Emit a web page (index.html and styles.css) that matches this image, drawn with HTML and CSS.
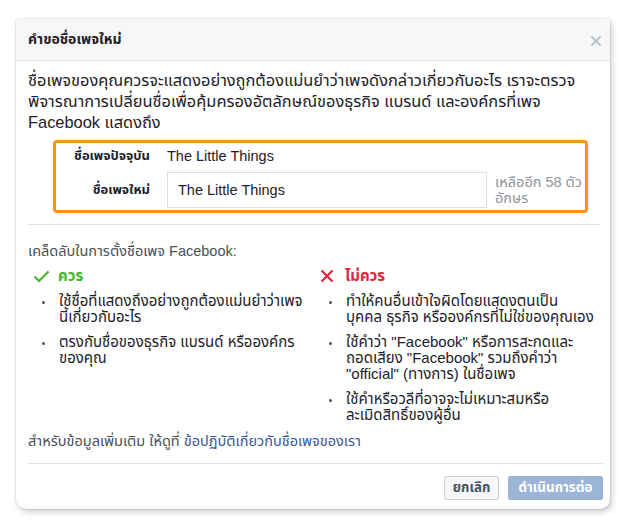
FILE: index.html
```html
<!DOCTYPE html>
<html lang="th">
<head>
<meta charset="utf-8">
<title>คำขอชื่อเพจใหม่</title>
<link rel="stylesheet" href="styles.css">
</head>
<body>
<div class="dialog">
  <div class="header">
    <div class="title">คำขอชื่อเพจใหม่</div>
    <svg class="close" width="10" height="10" viewBox="0 0 10 10"><path d="M1 1L9 9M9 1L1 9" stroke="#bec2c9" stroke-width="2" stroke-linecap="square"/></svg>
  </div>
  <div class="body">
    <p class="intro">ชื่อเพจของคุณควรจะแสดงอย่างถูกต้องแม่นยำว่าเพจดังกล่าวเกี่ยวกับอะไร เราจะตรวจพิจารณาการเปลี่ยนชื่อเพื่อคุ้มครองอัตลักษณ์ของธุรกิจ แบรนด์ และองค์กรที่เพจ Facebook แสดงถึง</p>
    <div class="highlight">
      <div class="row row-current">
        <div class="label">ชื่อเพจปัจจุบัน</div>
        <div class="value">The Little Things</div>
      </div>
      <div class="row row-new">
        <div class="label">ชื่อเพจใหม่</div>
        <div class="input">The Little Things</div>
        <div class="remain">เหลืออีก 58 ตัวอักษร</div>
      </div>
    </div>
    <div class="divider"></div>
    <p class="tips-title">เคล็ดลับในการตั้งชื่อเพจ Facebook:</p>
    <div class="cols">
      <div class="col">
        <div class="col-head do">
          <svg width="17" height="13" viewBox="0 0 17 13"><path d="M1.5 6.5L6 11L15.5 1.5" fill="none" stroke="#42b72a" stroke-width="2.2"/></svg>
          <span>ควร</span>
        </div>
        <ul class="list list-do">
          <li>ใช้ชื่อที่แสดงถึงอย่างถูกต้องแม่นยำว่าเพจนี้เกี่ยวกับอะไร</li>
          <li>ตรงกับชื่อของธุรกิจ แบรนด์ หรือองค์กรของคุณ</li>
        </ul>
      </div>
      <div class="col">
        <div class="col-head dont">
          <svg width="14" height="14" viewBox="0 0 14 14"><path d="M1.5 1.5L12.5 12.5M12.5 1.5L1.5 12.5" stroke="#e0243b" stroke-width="2.2"/></svg>
          <span>ไม่ควร</span>
        </div>
        <ul class="list list-dont">
          <li>ทำให้คนอื่นเข้าใจผิดโดยแสดงตนเป็น<br>บุคคล ธุรกิจ หรือองค์กรที่ไม่ใช่ของคุณเอง</li>
          <li>ใช้คำว่า "Facebook" หรือการสะกดและถอดเสียง "Facebook" รวมถึงคำว่า "official" (ทางการ) ในชื่อเพจ</li>
          <li>ใช้คำหรือวลีที่อาจจะไม่เหมาะสมหรือ<br>ละเมิดสิทธิ์ของผู้อื่น</li>
        </ul>
      </div>
    </div>
    <p class="more">สำหรับข้อมูลเพิ่มเติม ให้ดูที่ <a class="link" href="#">ข้อปฏิบัติเกี่ยวกับชื่อเพจของเรา</a></p>
  </div>
  <div class="footer">
    <button class="btn btn-cancel">ยกเลิก</button>
    <button class="btn btn-primary">ดำเนินการต่อ</button>
  </div>
</div>
</body>
</html>
```
FILE: styles.css
```css
html, body {
  margin: 0;
  padding: 0;
  background: #ffffff;
}
body {
  padding: 19px 16px;
  font-family: "Liberation Sans", "Noto Sans Thai", "Noto Sans", sans-serif;
  color: #1d2129;
}
.dialog {
  width: 594px;
  background: #fff;
  border-radius: 3px 3px 10px 10px;
  box-shadow: 0 0 0 1px rgba(0,0,0,0.06), 2px 3px 6px rgba(0,0,0,0.2);
}
.header {
  height: 41px;
  background: #f6f7f9;
  border-bottom: 1px solid #e5e5e5;
  border-radius: 3px 3px 0 0;
  display: flex;
  align-items: center;
  justify-content: space-between;
  padding: 0 9px 0 12px;
}
.title {
  font-size: 14px;
  font-weight: bold;
  color: #1d2129;
}
.close {
  display: block;
  margin-top: 2px;
}
.body {
  padding: 9px 10px 0 12px;
}
.intro {
  margin: 0;
  font-size: 16.4px;
  line-height: 21px;
  color: #1d2129;
}
.highlight {
  margin: 7px 12px 0 25px;
  border: 3px solid #f7931e;
  border-radius: 4px;
  padding: 2px 0 2px 0;
  display: flex;
  flex-direction: column;
  gap: 6px;
}
.row {
  display: flex;
  align-items: center;
}
.row-current {
  height: 21px;
}
.label {
  width: 94px;
  text-align: right;
  font-size: 13px;
  font-weight: bold;
  color: #1d2129;
  margin-right: 17px;
  flex: none;
}
.value {
  font-size: 14.5px;
  color: #1d2129;
}
.input {
  width: 298px;
  height: 34px;
  border: 1px solid #dddfe2;
  padding: 0 10px;
  display: flex;
  align-items: center;
  font-size: 14.5px;
  color: #1d2129;
  flex: none;
}
.remain {
  margin-left: 8px;
  font-size: 14.5px;
  line-height: 16px;
  color: #90949c;
  width: 92px;
}
.divider {
  height: 1px;
  background: #dddfe2;
  margin-top: 11px;
}
.tips-title {
  margin: 16px 0 0 0;
  font-size: 14.5px;
  line-height: 20px;
  color: #4b4f56;
}
.cols {
  display: grid;
  grid-template-columns: 287px 1fr;
  margin-top: 5px;
}
.col-head {
  display: flex;
  align-items: center;
  padding-left: 5px;
  height: 20px;
  font-size: 15px;
  font-weight: bold;
}
.col-head svg {
  display: block;
  margin-right: 8px;
}
.col-head.do span {
  color: #42b72a;
}
.col-head.dont span {
  color: #e0243b;
  margin-left: 3px;
}
.list {
  list-style: none;
  margin: 7px 0 0 0;
  padding: 0 2px 0 31px;
  display: flex;
  flex-direction: column;
  gap: 9px;
}
.list-do {
  padding-right: 6px;
}
.list li {
  position: relative;
  font-size: 15px;
  line-height: 16px;
  color: #1d2129;
}
.list li::before {
  content: "";
  position: absolute;
  left: -17px;
  top: 8px;
  width: 3px;
  height: 3px;
  border-radius: 50%;
  background: #4b4f56;
}
.more {
  margin: 8px 0 0 0;
  font-size: 14.5px;
  line-height: 20px;
  color: #4b4f56;
}
.link {
  color: #365899;
  text-decoration: none;
}
.footer {
  margin: 12px 7px 0 12px;
  border-top: 1px solid #dddfe2;
  padding: 12px 0 9px 0;
  display: flex;
  justify-content: flex-end;
  gap: 9px;
}
.btn {
  height: 24px;
  font-family: inherit;
  font-size: 13.4px;
  font-weight: bold;
  border-radius: 2px;
  padding: 0 4px;
  cursor: pointer;
}
.btn-cancel {
  background: #f6f7f9;
  border: 1px solid #ced0d4;
  color: #4b4f56;
  width: 55px;
}
.btn-primary {
  background: #9cb4d8;
  border: 1px solid #9cb4d8;
  color: #ffffff;
  width: 95px;
}
```
